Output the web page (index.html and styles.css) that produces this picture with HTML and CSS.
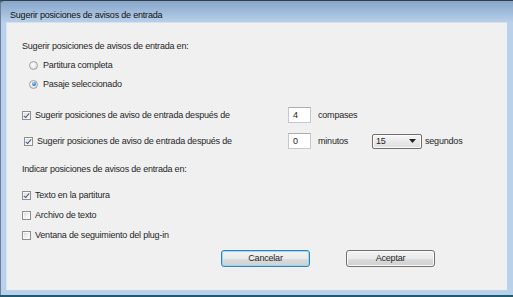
FILE: index.html
```html
<!DOCTYPE html>
<html lang="es">
<head>
<meta charset="utf-8">
<title>Sugerir posiciones de avisos de entrada</title>
<link rel="stylesheet" href="styles.css">
</head>
<body>
<div class="window">
  <div class="titlebar">Sugerir posiciones de avisos de entrada</div>
  <div class="client">
    <div class="row label-row">Sugerir posiciones de avisos de entrada en:</div>
    <div class="row radio-row r1"><span class="radio"></span><span class="txt-r">Partitura completa</span></div>
    <div class="row radio-row r2"><span class="radio on"></span><span class="txt-r">Pasaje seleccionado</span></div>

    <div class="row opt-row o1">
      <div class="opt-lead"><span class="check on"></span><span class="txt-c">Sugerir posiciones de aviso de entrada después de</span></div>
      <div class="textbox">4</div>
      <span class="unit">compases</span>
    </div>
    <div class="row opt-row o2">
      <div class="opt-lead shift"><span class="check on"></span><span class="txt-c">Sugerir posiciones de aviso de entrada después de</span></div>
      <div class="textbox">0</div>
      <span class="unit unit-min">minutos</span>
      <div class="combo"><span>15</span><svg class="arrow" width="7" height="4" viewBox="0 0 7 4"><path d="M0 0h7L3.5 4z" fill="#222"/></svg></div>
      <span class="unit-sec">segundos</span>
    </div>

    <div class="row label-row l2">Indicar posiciones de avisos de entrada en:</div>
    <div class="row check-row c1"><span class="check on"></span><span class="txt-c">Texto en la partitura</span></div>
    <div class="row check-row"><span class="check"></span><span class="txt-c">Archivo de texto</span></div>
    <div class="row check-row"><span class="check"></span><span class="txt-c">Ventana de seguimiento del plug-in</span></div>

    <div class="buttons">
      <div class="btn default">Cancelar</div>
      <div class="btn">Aceptar</div>
    </div>
  </div>
</div>
</body>
</html>
```

FILE: styles.css
```css
* { box-sizing: border-box; }

html, body {
  margin: 0;
  padding: 0;
}

body {
  width: 513px;
  height: 297px;
  background: #1f5b6a;
  font-family: "Liberation Sans", Arial, sans-serif;
  font-size: 9px;
  letter-spacing: -0.2px;
  color: #262626;
  overflow: hidden;
}

.window {
  width: 513px;
  height: 295px;
  border-top: 1px solid #3b3f45;
  border-left: 1px solid #6e8099;
  border-top-left-radius: 4px;
  background: linear-gradient(#86a6cb 0px, #a7c1df 14px, #b9d1ea 22px, #b9d1ea 100%);
  padding: 0 6px 5px 5px;
  display: flex;
  flex-direction: column;
}

.titlebar {
  height: 21px;
  padding: 8px 0 0 4px;
  line-height: 12px;
  color: #111;
}

.client {
  flex: 1;
  background: #f0f0f0;
  border-left: 1px solid #d6e4f3;
  border-top: 1px solid #d3e1f0;
  padding: 15px 0 0 15px;
  display: flex;
  flex-direction: column;
}

.row {
  display: flex;
  align-items: center;
  white-space: nowrap;
}

.label-row { height: 16px; }
.l2 { margin-top: 10px; }

.radio-row { height: 20px; }
.r1 { margin-top: 1px; }
.r2 { height: 18px; }

.radio {
  width: 9px;
  height: 9px;
  margin-left: 7px;
  border-radius: 50%;
  border: 1px solid #a0a0a0;
  background: radial-gradient(circle at 40% 40%, #ffffff 0, #e6e6e6 60%, #cfcfcf 100%);
  position: relative;
  flex: none;
}
.radio.on::after {
  content: "";
  position: absolute;
  left: 1.5px;
  top: 1.5px;
  width: 4px;
  height: 4px;
  border-radius: 50%;
  background: radial-gradient(circle at 40% 35%, #9fd4ff 0, #2f7fcf 60%, #1c5a9e 100%);
}
.txt-r { margin-left: 5px; }

.check {
  width: 9px;
  height: 9px;
  border: 1px solid #8e8f8f;
  background: linear-gradient(135deg, #d6d6d6 0, #f4f4f4 60%, #ffffff 100%);
  box-shadow: inset 0 0 0 1px #f6f6f6;
  position: relative;
  flex: none;
}
.check.on::after {
  content: "";
  position: absolute;
  left: 2px;
  top: 0px;
  width: 2px;
  height: 5px;
  border-right: 1.5px solid #3f5787;
  border-bottom: 1.5px solid #3f5787;
  transform: rotate(40deg);
}
.txt-c { margin-left: 4px; }

.opt-row { height: 20px; }
.o1 { margin-top: 12px; }
.o2 { margin-top: 6px; }

.opt-lead {
  width: 266px;
  display: flex;
  align-items: center;
  flex: none;
}
.opt-lead.shift { padding-left: 2px; }

.textbox {
  width: 23px;
  height: 16px;
  background: #fff;
  border: 1px solid #c4c9d0;
  border-top-color: #abadb3;
  padding-left: 4px;
  line-height: 14px;
  flex: none;
}
.unit { margin-left: 7px; }
.unit-min { width: 54px; flex: none; }

.combo {
  width: 50px;
  height: 15px;
  border: 1px solid #6f6f6f;
  border-radius: 2px;
  background: linear-gradient(#f7f7f7, #e9e9e9 50%, #dddddd);
  box-shadow: inset 0 0 0 1px #fbfbfb;
  display: flex;
  align-items: center;
  justify-content: space-between;
  padding: 0 5px 0 3px;
  flex: none;
}
.arrow { display: block; }
.unit-sec { margin-left: 3px; }

.check-row { height: 20px; }
.c1 { margin-top: 8px; }

.buttons {
  display: flex;
  margin-top: 5px;
  padding-left: 199px;
  gap: 36px;
}

.btn {
  width: 89px;
  height: 17px;
  border: 1px solid #707070;
  border-radius: 3px;
  background: linear-gradient(#f2f2f2 0, #ebebeb 50%, #dddddd 51%, #cfcfcf 100%);
  box-shadow: inset 0 0 0 1px #fbfbfb;
  text-align: center;
  line-height: 15px;
}
.btn.default {
  border-color: #3c7fb1;
  box-shadow: inset 0 0 0 1px #8fdcf7;
}
```
